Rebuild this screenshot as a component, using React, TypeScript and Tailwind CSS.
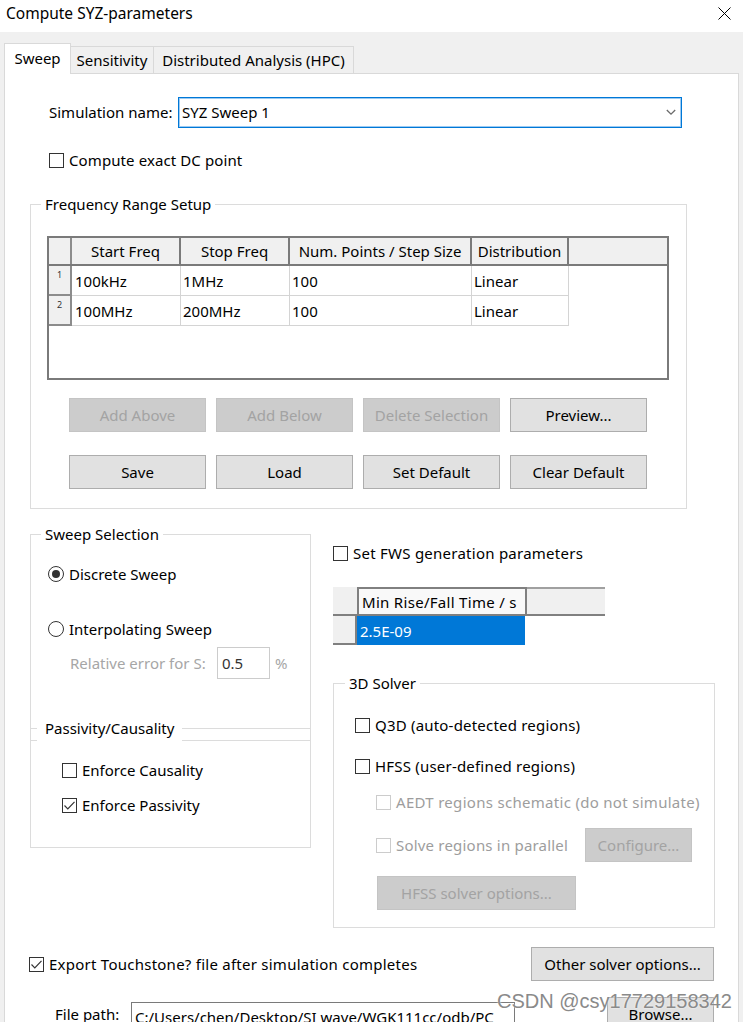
import React from "react";

type CkProps = { checked?: boolean; disabled?: boolean };
const Check = ({ checked = false, disabled = false }: CkProps) => (
  <div
    className={`w-[15px] h-[15px] shrink-0 border bg-white flex items-center justify-center ${
      disabled ? "border-[#cccccc]" : "border-[#333333]"
    }`}
  >
    {checked && (
      <svg width="13" height="13" viewBox="0 0 13 13">
        <path d="M1.5 6.5 L4.8 9.8 L11.5 2.8" fill="none" stroke="#333333" strokeWidth="1.2" />
      </svg>
    )}
  </div>
);

const Radio = ({ on = false }: { on?: boolean }) => (
  <div className="w-[16px] h-[16px] shrink-0 rounded-full border border-[#333333] bg-white flex items-center justify-center">
    {on && <div className="w-[8px] h-[8px] rounded-full bg-[#333333]" />}
  </div>
);

type BtnProps = { children: React.ReactNode; w: string; disabled?: boolean };
const Btn = ({ children, w, disabled = false }: BtnProps) => (
  <div
    className={`${w} h-[34px] shrink-0 flex items-center justify-center border ${
      disabled
        ? "bg-[#cccccc] border-[#c4c4c4] text-[#a3a3a3]"
        : "bg-[#e1e1e1] border-[#adadad] text-black"
    }`}
  >
    {children}
  </div>
);

const FreqRow = ({ n, a, b, c, d }: { n: string; a: string; b: string; c: string; d: string }) => (
  <div className="flex h-[30px]">
    <div className="w-[23px] shrink-0 bg-[#f0f0f0] border-r-2 border-b-2 border-[#8c8c8c] text-[9px] leading-[10px] pl-[8px] pt-[4px] text-[#333]">
      {n}
    </div>
    <div className="w-[109px] shrink-0 border-r border-b border-[#d4d4d4] flex items-center pl-[3px]">{a}</div>
    <div className="w-[109px] shrink-0 border-r border-b border-[#d4d4d4] flex items-center pl-[2px]">{b}</div>
    <div className="w-[182px] shrink-0 border-r border-b border-[#d4d4d4] flex items-center pl-[2px]">{c}</div>
    <div className="w-[97px] shrink-0 border-r border-b border-[#d4d4d4] flex items-center pl-[2px]">{d}</div>
  </div>
);

export default function App() {
  return (
    <div className="relative w-[743px] h-[1022px] overflow-hidden bg-[#f0f0f0] font-['Noto_Sans',sans-serif] text-[15px] leading-[20px] text-black">
      {/* Title bar */}
      <div className="h-[32px] bg-white flex items-start justify-between">
        <div className="ml-[6px] mt-[2px] text-[15.5px] leading-[22px]">Compute SYZ-parameters</div>
        <svg className="mt-[7px] mr-[12px]" width="13" height="13" viewBox="0 0 13 13">
          <path d="M0.5 0.5 L12.5 12.5 M12.5 0.5 L0.5 12.5" stroke="#000" strokeWidth="1" />
        </svg>
      </div>

      {/* Tabs */}
      <div className="h-[41px] flex items-end pl-[4px]">
        <div className="relative z-[1] -mb-px w-[67px] h-[31px] bg-white border border-b-0 border-[#d9d9d9] flex items-start justify-center pt-[4px]">
          Sweep
        </div>
        <div className="-ml-px w-[84px] h-[27px] bg-[#f0f0f0] border border-b-0 border-[#d9d9d9] flex items-start justify-center pt-[3px]">
          Sensitivity
        </div>
        <div className="-ml-px w-[201px] h-[27px] bg-[#f0f0f0] border border-b-0 border-[#d9d9d9] flex items-start justify-center pt-[3px]">
          Distributed Analysis (HPC)
        </div>
      </div>

      {/* Panel */}
      <div className="ml-[4px] w-[735px] h-[960px] bg-white border border-[#d9d9d9] flex flex-col">
        {/* Simulation name */}
        <div className="mt-[23px] ml-[44px] flex items-center h-[31px]">
          <div className="w-[129px] -mt-[2px]">Simulation name:</div>
          <div className="w-[504px] h-[31px] border border-[#0078d7] shadow-[inset_0_0_0_1px_#9ccaf2] flex items-center justify-between pl-[3px] pr-[5px]">
            <span className="-mt-[2px]">SYZ Sweep 1</span>
            <svg width="10" height="7" viewBox="0 0 10 7">
              <path d="M0.8 1 L5 5.2 L9.2 1" fill="none" stroke="#6b6b6b" strokeWidth="1.3" />
            </svg>
          </div>
        </div>

        {/* DC point */}
        <div className="mt-[22px] ml-[44px] flex items-center h-[20px] gap-[5px]">
          <Check />
          <span className="tracking-[0.1px]">Compute exact DC point</span>
        </div>

        {/* Frequency Range Setup */}
        <div className="mt-[34px] ml-[25px] w-[657px] h-[306px] border border-[#dcdcdc] flex flex-col">
          <div className="-mt-[11px] ml-[10px] px-[4px] bg-white self-start">Frequency Range Setup</div>

          <div className="mt-[22px] ml-[16px] w-[622px] h-[144px] border-2 border-[#7a7a7a] bg-white flex flex-col">
            <div className="flex h-[28px] bg-[#f0f0f0] border-b-2 border-[#7a7a7a]">
              <div className="w-[23px] shrink-0 border-r-2 border-[#8c8c8c]" />
              <div className="w-[109px] shrink-0 border-r-2 border-[#7a7a7a] flex items-center justify-center">Start Freq</div>
              <div className="w-[109px] shrink-0 border-r-2 border-[#7a7a7a] flex items-center justify-center">Stop Freq</div>
              <div className="w-[182px] shrink-0 border-r-2 border-[#7a7a7a] flex items-center justify-center whitespace-nowrap">
                Num. Points / Step Size
              </div>
              <div className="w-[97px] shrink-0 border-r-2 border-[#7a7a7a] flex items-center justify-center">Distribution</div>
              <div className="flex-1" />
            </div>
            <FreqRow n="1" a="100kHz" b="1MHz" c="100" d="Linear" />
            <FreqRow n="2" a="100MHz" b="200MHz" c="100" d="Linear" />
          </div>

          <div className="mt-[18px] ml-[38px] flex gap-[10px]">
            <Btn w="w-[137px]" disabled>Add Above</Btn>
            <Btn w="w-[137px]" disabled>Add Below</Btn>
            <Btn w="w-[137px]" disabled>Delete Selection</Btn>
            <Btn w="w-[137px]">Preview...</Btn>
          </div>
          <div className="mt-[23px] ml-[38px] flex gap-[10px]">
            <Btn w="w-[137px]">Save</Btn>
            <Btn w="w-[137px]">Load</Btn>
            <Btn w="w-[137px]">Set Default</Btn>
            <Btn w="w-[137px]">Clear Default</Btn>
          </div>
        </div>

        {/* Lower section */}
        <div className="mt-[25px] ml-[25px] flex items-start">
          {/* Sweep Selection */}
          <div className="w-[281px] h-[314px] border border-[#dcdcdc] flex flex-col">
            <div className="-mt-[11px] ml-[10px] px-[4px] bg-white self-start">Sweep Selection</div>
            <div className="mt-[20px] ml-[17px] flex items-center h-[20px] gap-[5px]">
              <Radio on />
              <span>Discrete Sweep</span>
            </div>
            <div className="mt-[35px] ml-[17px] flex items-center h-[20px] gap-[5px]">
              <Radio />
              <span>Interpolating Sweep</span>
            </div>
            <div className="mt-[8px] ml-[39px] flex items-center h-[32px]">
              <div className="w-[147px] text-[#a6a6a6]">Relative error for S:</div>
              <div className="w-[53px] h-[32px] border border-[#cccccc] flex items-center pl-[4px] text-[#333]">0.5</div>
              <div className="ml-[5px] text-[#a6a6a6]">%</div>
            </div>
            <div className="mt-[49px] h-[13px] border-y border-[#dcdcdc]">
              <div className="-mt-[11px] ml-[6px] px-[8px] h-[24px] bg-white w-fit">Passivity/Causality</div>
            </div>
            <div className="mt-[19px] ml-[31px] flex items-center h-[20px] gap-[5px]">
              <Check />
              <span>Enforce Causality</span>
            </div>
            <div className="mt-[15px] ml-[31px] flex items-center h-[20px] gap-[5px]">
              <Check checked />
              <span>Enforce Passivity</span>
            </div>
          </div>

          {/* Right column */}
          <div className="ml-[22px] flex flex-col">
            <div className="mt-[9px] flex items-center h-[20px] gap-[5px]">
              <Check />
              <span className="tracking-[0.25px]">Set FWS generation parameters</span>
            </div>

            <div className="mt-[24px] flex flex-col w-[272px]">
              <div className="flex h-[29px]">
                <div className="w-[24px] shrink-0 bg-[#f0f0f0] border-b-2 border-[#808080]" />
                <div className="w-[170px] shrink-0 bg-[#f9f9f9] border-2 border-[#808080] flex items-center pl-[3px] whitespace-nowrap tracking-[0.3px]">
                  Min Rise/Fall Time / s
                </div>
                <div className="flex-1 bg-[#f0f0f0] border-y-2 border-t-[#a0a0a0] border-b-[#808080]" />
              </div>
              <div className="flex h-[29px]">
                <div className="w-[24px] shrink-0 bg-[#f0f0f0] border-r-2 border-b-2 border-[#808080]" />
                <div className="w-[168px] shrink-0 bg-[#0078d7] text-white flex items-center pl-[3px]">2.5E-09</div>
              </div>
            </div>

            {/* 3D Solver */}
            <div className="mt-[38px] w-[382px] h-[245px] border border-[#dcdcdc] flex flex-col">
              <div className="-mt-[11px] ml-[11px] px-[4px] bg-white self-start">3D Solver</div>
              <div className="mt-[22px] ml-[21px] flex items-center h-[20px] gap-[5px]">
                <Check />
                <span className="tracking-[0.2px]">Q3D (auto-detected regions)</span>
              </div>
              <div className="mt-[21px] ml-[21px] flex items-center h-[20px] gap-[5px]">
                <Check />
                <span className="tracking-[0.2px]">HFSS (user-defined regions)</span>
              </div>
              <div className="mt-[16px] ml-[42px] flex items-center h-[20px] gap-[5px]">
                <Check disabled />
                <span className="text-[#9d9d9d] whitespace-nowrap tracking-[0.3px]">AEDT regions schematic (do not simulate)</span>
              </div>
              <div className="mt-[16px] ml-[42px] flex items-center h-[34px]">
                <Check disabled />
                <span className="ml-[5px] w-[189px] text-[#9d9d9d] tracking-[0.2px]">Solve regions in parallel</span>
                <Btn w="w-[107px]" disabled>Configure...</Btn>
              </div>
              <div className="mt-[14px] ml-[43px] flex">
                <Btn w="w-[199px]" disabled>HFSS solver options...</Btn>
              </div>
            </div>
          </div>
        </div>

        {/* Export row */}
        <div className="mt-[19px] ml-[24px] w-[685px] flex items-center justify-between h-[34px]">
          <div className="flex items-center gap-[5px]">
            <Check checked />
            <span className="tracking-[0.25px]">Export Touchstone? file after simulation completes</span>
          </div>
          <Btn w="w-[183px]">Other solver options...</Btn>
        </div>

        {/* File path row */}
        <div className="mt-[16px] ml-[50px] w-[659px] flex items-start">
          <div className="w-[76px] mt-[7px]">File path:</div>
          <div className="w-[384px] h-[30px] mt-[5px] border border-[#7a7a7a] flex items-center pl-[3px] overflow-hidden whitespace-nowrap">
            C:/Users/chen/Desktop/SI wave/WGK111cc/odb/PC
          </div>
          <div className="ml-auto">
            <Btn w="w-[107px]">Browse...</Btn>
          </div>
        </div>
      </div>

      {/* Watermark */}
      <div className="absolute left-[497px] top-[989px] font-['Liberation_Sans',Arial,sans-serif] text-[20px] leading-[24px] text-[#8a8a8a] [text-shadow:0_0_2px_#ffffff] whitespace-nowrap pointer-events-none">
        CSDN @csy17729158342
      </div>
    </div>
  );
}
